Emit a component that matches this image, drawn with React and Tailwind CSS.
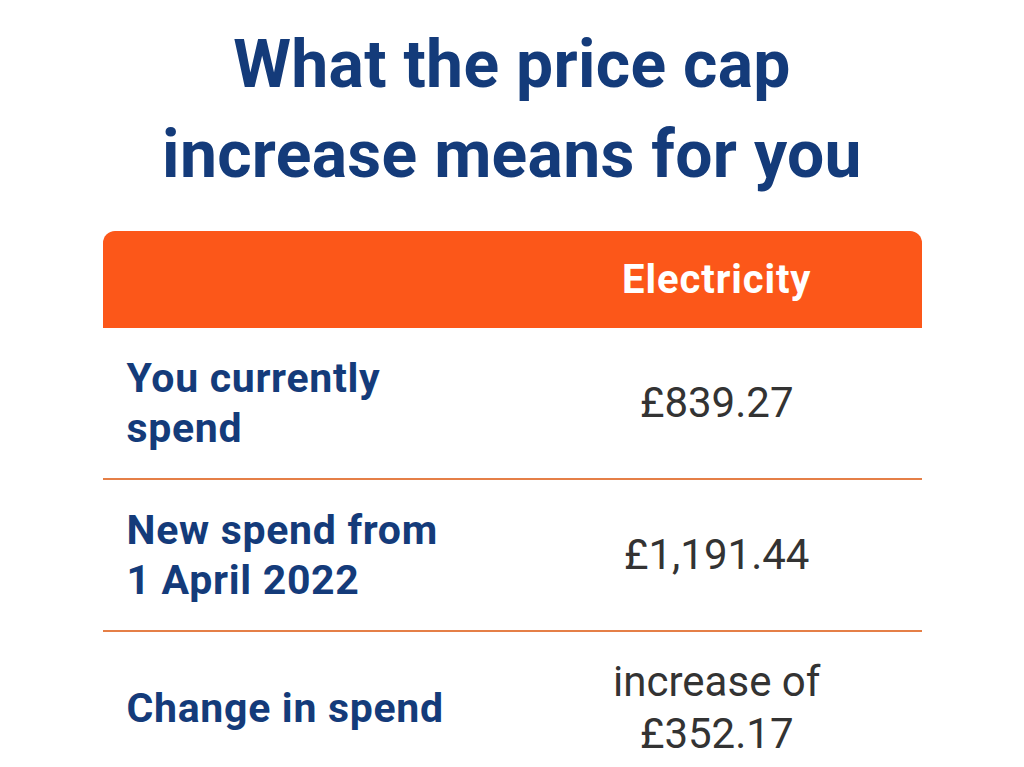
import React from 'react';

const rows = [
  { label: ['You currently', 'spend'], value: ['£839.27'] },
  { label: ['New spend from', '1 April 2022'], value: ['£1,191.44'] },
  { label: ['Change in spend'], value: ['increase of', '£352.17'] },
];

export default function App() {
  return (
    <div className="min-h-screen bg-white font-['Roboto',sans-serif] pt-5">
      <h1 className="text-center text-[66px] leading-[90px] font-bold tracking-[0.3px] text-[#143b7a]">
        What the price cap
        <br />
        increase means for you
      </h1>

      <div className="w-[819px] mx-auto mt-[31px]">
        {/* Header */}
        <div className="grid grid-cols-2 h-[97px] bg-[#fc5719] rounded-t-xl">
          <div />
          <div className="flex items-center justify-center text-white font-bold text-[40px] tracking-[0.9px]">
            Electricity
          </div>
        </div>

        {rows.map((row, i) => (
          <div
            key={i}
            className={`grid grid-cols-2 h-[152px] ${i < rows.length - 1 ? 'border-b-2 border-[#e57f47]' : ''}`}
          >
            <div className="flex flex-col justify-center pl-6 text-[#143b7a] font-bold text-[41px] tracking-[0.7px] leading-[50px]">
              {row.label.map((l) => (
                <span key={l}>{l}</span>
              ))}
            </div>
            <div className="flex flex-col justify-center items-center text-[#333333] text-[42px] leading-[52px]">
              {row.value.map((v) => (
                <span key={v}>{v}</span>
              ))}
            </div>
          </div>
        ))}
      </div>
    </div>
  );
}
